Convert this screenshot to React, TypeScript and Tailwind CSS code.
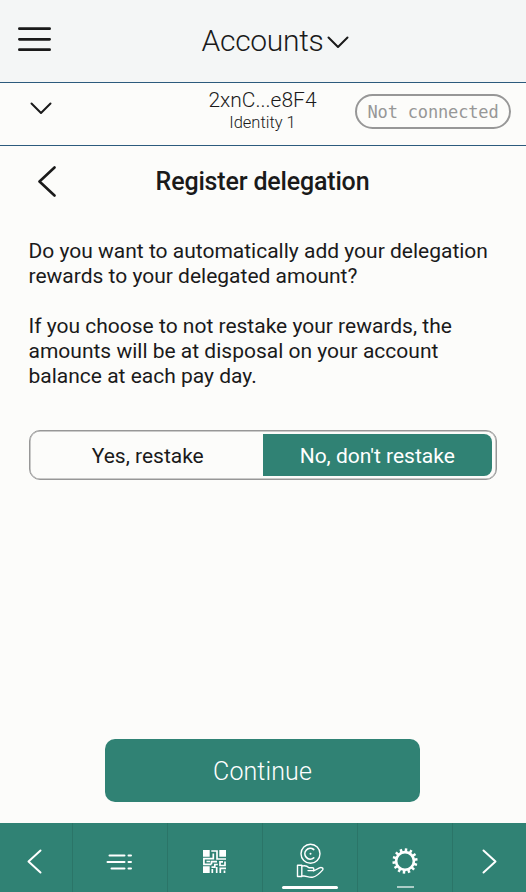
import React from "react";

function Chevron({ points, w, h, sw = 2 }: { points: string; w: number; h: number; sw?: number }) {
  return (
    <svg width={w} height={h} viewBox={`0 0 ${w} ${h}`} className="block" fill="none" stroke="currentColor" strokeWidth={sw} strokeLinecap="round" strokeLinejoin="round">
      <polyline points={points} />
    </svg>
  );
}

function QrIcon() {
  return (
    <svg width="23" height="23" viewBox="0 0 23 23" fill="none" stroke="currentColor" strokeWidth="1.7">
      <path d="M0 0h6.700v6.700H0zM16.300 0H23v6.700h-6.700zM0 16.300h6.700V23H0z" fill="currentColor" stroke="none" />
      <path d="M8.300 1h5.700v5.700M10.300 3.500v5.200H.900v5.600h7.600M3.500 11.500h3.500M14 6v3h9M8.500 14.300v-2.600h5.500M22 11.500v4h-5v-3.700h3M8.500 17.200h3.300v-2.700h3M9.300 19v4M13.700 17v6M17.300 23v-4.700h5.700M21.500 23v-2.500" />
    </svg>
  );
}

function EarnIcon() {
  return (
    <svg width="28" height="36" viewBox="0 0 28 36" fill="none" stroke="currentColor" strokeWidth="1.400" strokeLinejoin="round" strokeLinecap="round">
      <circle cx="14.500" cy="10.700" r="9.500" />
      <path d="M17.700 6.500a5.400 5.400 0 1 0 0 8.400" strokeWidth="1.700" />
      <circle cx="14.500" cy="10.700" r="1" fill="currentColor" stroke="none" />
      <path d="M1.500 22.200h4.300v11.300H1.500zM5.800 23.200c3-1 5-.5 7.200 1.500h3.500c1.800 0 1.800 2.900 0 2.900H12M17.500 28l6-3.200c2-.8 4.500.3 3 2.300-3 3.500-6 6-9.500 7-3.500 1-6.500-1.300-11.200-1.300" />
    </svg>
  );
}

function GearIcon() {
  return (
    <svg width="26" height="26" viewBox="0 0 26 26" fill="none" stroke="currentColor">
      <circle cx="13" cy="13" r="8.900" strokeWidth="2.600" />
      {Array.from({ length: 14 }, (_, i) => (
        <path key={i} d="M13 4V.400" strokeWidth="2.500" transform={`rotate(${((i + 0.2) * 360) / 14} 13 13)`} />
      ))}
    </svg>
  );
}

export default function App() {
  return (
    <div className="flex h-[892px] w-[526px] flex-col overflow-hidden bg-[#fcfcfa] font-['Roboto',sans-serif] text-[#1a1a1a]">
      <header className="grid h-[83px] shrink-0 grid-cols-[1fr_auto_1fr] items-center border-b border-[#2c5b7d] bg-[#f4f6f6]">
        <button aria-label="Menu" className="-mt-1 ml-[18px]">
          <svg width="33" height="25" viewBox="0 0 33 25" className="block" stroke="currentColor" strokeWidth="2.800" strokeLinecap="round">
            <path d="M1.400 1.700H31.600M1.400 12.300H31.600M1.400 22.700H31.600" />
          </svg>
        </button>
        <h1 className="ml-[25px] flex items-center gap-1 text-[30px] leading-9 font-light">
          <span className="tracking-[-0.3px]">Accounts</span>
          <span className="pt-[2px]"><Chevron points="1.500,1.500 11,11 20.500,1.500" w={22} h={13} /></span>
        </h1>
      </header>

      <section className="grid h-[63px] shrink-0 grid-cols-[1fr_110px_1fr] border-b border-[#2c5b7d]">
        <button aria-label="Show accounts" className="mt-[19px] ml-[30px] self-start">
          <Chevron points="1.500,1.500 11,11 20.500,1.500" w={22} h={13} />
        </button>
        <div className="pt-[5px] pr-px text-center font-light whitespace-nowrap">
          <div className="text-[21px] leading-[25px]">2xnC...e8F4</div>
          <div className="text-[16.5px] leading-5">Identity 1</div>
        </div>
        <div className="mt-[11px] mr-[15px] flex h-[35px] w-[156px] items-center justify-center justify-self-end rounded-full border-2 border-[#979797] pt-[3px] font-['DejaVu_Sans_Mono',monospace] text-[17px] tracking-[-0.16px] whitespace-nowrap text-[#979797]">
          Not connected
        </div>
      </section>

      <main className="flex grow flex-col">
        <div className="grid h-[72px] grid-cols-[60px_1fr_60px] items-center">
          <button aria-label="Back" className="-mt-px ml-[37px]">
            <Chevron points="17.500,1.500 2.500,15.500 17.500,29.500" w={20} h={31} sw={2.6} />
          </button>
          <h2 className="pr-px text-center text-[25px] leading-[30px] font-medium tracking-[-0.17px]">Register delegation</h2>
        </div>
        <div className="mt-[21px] px-[28.500px] text-[21px] leading-[25px] whitespace-nowrap">
          <p>Do you want to automatically add your delegation<br />rewards to your delegated amount?</p>
          <p className="mt-[25px]">If you choose to not restake your rewards, the<br />amounts will be at disposal on your account<br />balance at each pay day.</p>
        </div>
        <div className="mx-[29px] mt-[41px] grid h-[50px] grid-cols-2 rounded-[11px] border-[1.500px] border-[#979797] p-[3px] pr-[4px] text-[21px] shadow-[inset_0_0_0_0.5px_#979797]">
          <button className="pt-[3px]">Yes, restake</button>
          <button className="rounded-r-[8px] bg-[#308274] pt-[3px] text-white">No, don't restake</button>
        </div>
        <button className="mt-auto mb-[21px] ml-[105px] h-[63px] w-[315px] rounded-[10px] bg-[#308274] pt-[3px] text-[25px] font-light tracking-[0.1px] text-white">Continue</button>
      </main>

      <nav className="grid h-[69px] shrink-0 grid-cols-[73px_95px_95px_95px_95px_73px] bg-[#308274] text-white [&>button:not(:last-child)]:border-r [&>button:not(:last-child)]:border-[#2b7568]">
        <button className="flex justify-center pt-[26px] pr-[3px]"><Chevron points="13.500,1.500 1.500,12.500 13.500,23.500" w={15} h={25} /></button>
        <button className="flex justify-center pt-[30px] pr-[2px]">
          <svg width="26" height="18" viewBox="0 0 26 18" fill="none" stroke="currentColor" strokeWidth="2" strokeLinecap="round">
            <path d="M3.500 2.500H18.500M1.500 9H18.500M5.500 15.500H18.500M22.500 2.500h2.500M22.500 9h2.500M22.500 15.500h2.500" />
          </svg>
        </button>
        <button className="flex justify-center pt-[27px] pr-px"><QrIcon /></button>
        <button className="flex flex-col items-center pt-[20px]">
          <EarnIcon />
          <span className="mt-[7px] h-[3px] w-14 rounded-sm bg-white" />
        </button>
        <button className="flex flex-col items-center pt-[25px]">
          <GearIcon />
          <span className="mt-3 h-[2px] w-[17px] bg-white/60" />
        </button>
        <button className="flex justify-center pt-[26px]"><Chevron points="1.500,1.500 13.500,12.500 1.500,23.500" w={15} h={25} /></button>
      </nav>
    </div>
  );
}
